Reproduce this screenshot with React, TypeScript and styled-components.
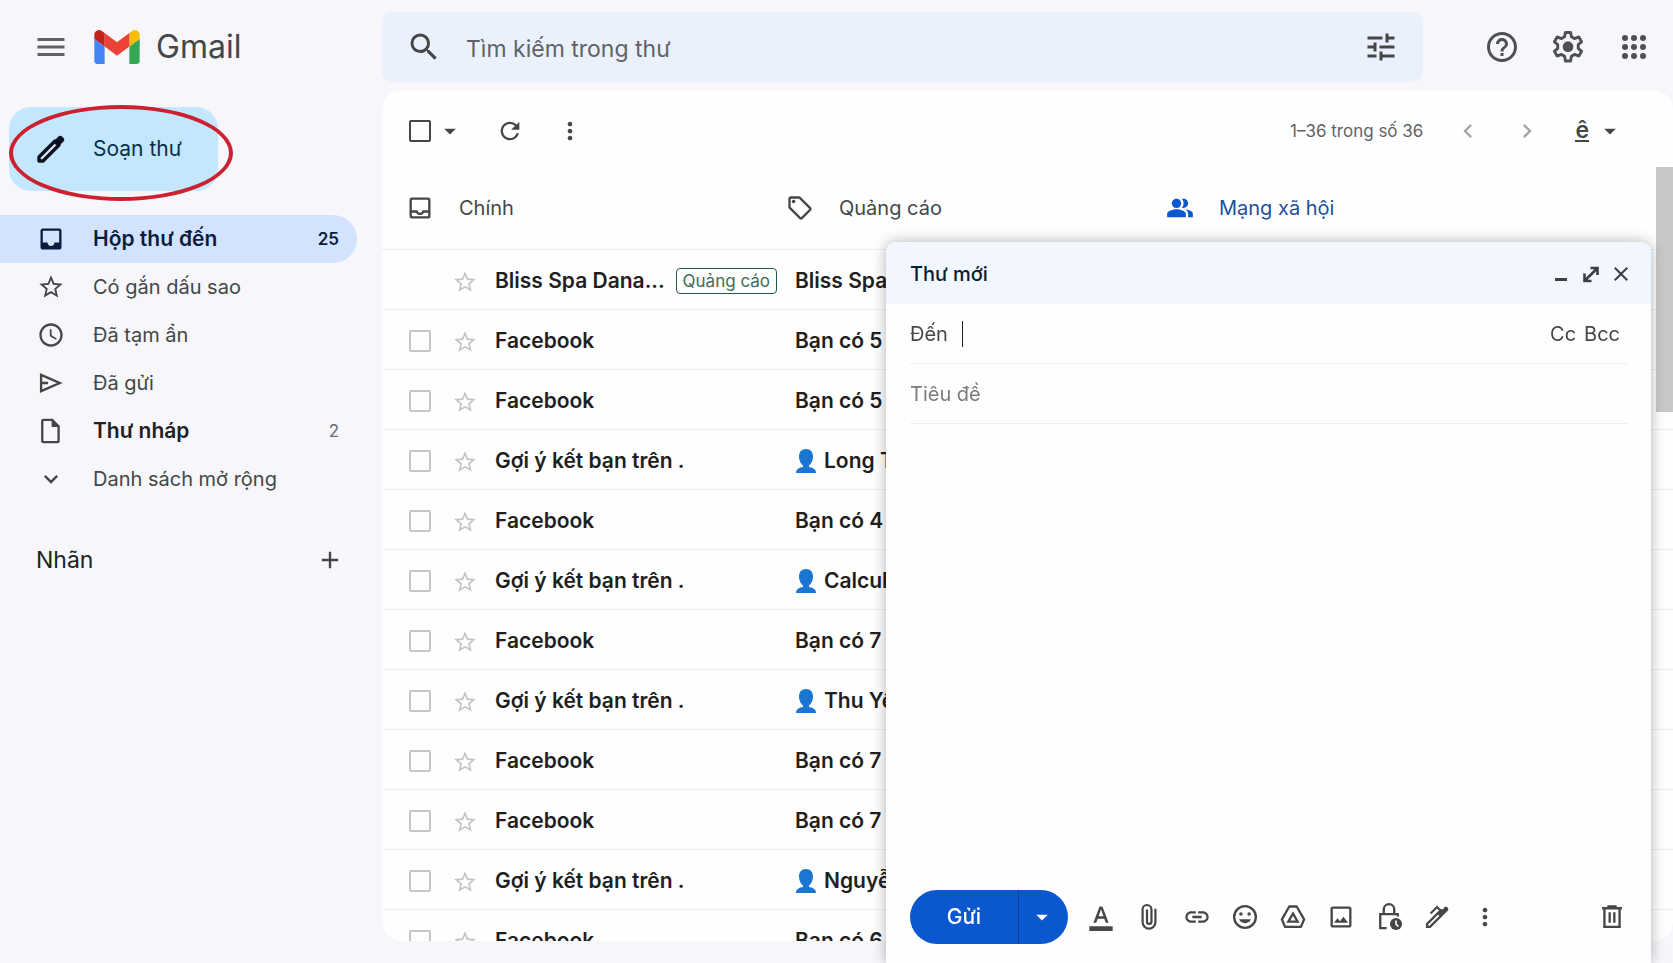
import React from "react";
import styled, { createGlobalStyle, css } from "styled-components";
import {
  MdMenu, MdSearch, MdTune, MdHelpOutline, MdInbox, MdOutlineInbox, MdStarOutline, MdAccessTime,
  MdExpandMore, MdAdd, MdArrowDropDown, MdRefresh, MdMoreVert, MdChevronLeft, MdChevronRight,
  MdPeopleAlt, MdOutlineSell, MdClose, MdLink, MdOutlineInsertPhoto, MdFormatColorText,
} from "react-icons/md";

const GlobalStyle = createGlobalStyle`
  *, *::before, *::after { box-sizing: border-box; }
  body {
    margin: 0;
    background: #f6f6fb;
    color: #444746;
    font-family: Inter, "Noto Sans", sans-serif;
    font-size: 20px;
    line-height: 24px;
  }
  button, input { font: inherit; color: inherit; }
  button { border: 0; padding: 0; background: none; cursor: pointer; }
  h1, h2, ul { margin: 0; padding: 0; font-weight: 400; }
  ul { list-style: none; }
  svg { display: block; flex: none; }
`;

const Page = styled.div`
  display: grid;
  grid-template-columns: 382px minmax(0, 1fr);
  grid-template-rows: 90px minmax(0, 1fr);
  height: 100vh;
  overflow: hidden;
`;

const Brand = styled.div`
  display: flex;
  align-items: center;
  padding: 4px 0 0 34px;
`;

const Logo = styled.a`
  display: flex;
  align-items: center;
  gap: 16px;
  margin-left: 26px;
  color: #444746;
  font-size: 32px;
  line-height: 40px;
  text-decoration: none;
`;

const TopBar = styled.header`
  display: flex;
  padding: 12px 22px 8px 0;
`;

const Search = styled.form`
  display: flex;
  align-items: center;
  flex: 1;
  padding: 0 26px;
  border-radius: 10px;
  background: #eaf1fc;
`;

const SearchInput = styled.input`
  flex: 1;
  min-width: 0;
  margin: 4px 20px 0 26px;
  padding: 0;
  border: 0;
  outline: 0;
  background: none;
  font-size: 23px;
  line-height: 32px;
  &::placeholder { color: #5f6368; opacity: 1; }
`;

const TopActions = styled.div`
  display: flex;
  align-items: center;
  gap: 32px;
  margin-left: 62px;
  color: #4d5156;
`;

const IconButton = styled.button<{ $size?: number; $color?: string }>`
  display: flex;
  align-items: center;
  justify-content: center;
  flex: none;
  width: ${(p) => p.$size ?? 34}px;
  height: ${(p) => p.$size ?? 34}px;
  color: ${(p) => p.$color ?? "inherit"};
`;

const Sidebar = styled.nav`
  display: flex;
  flex-direction: column;
  align-items: flex-start;
  padding: 17px 25px 0 0;
`;

const ComposeButton = styled.button`
  position: relative;
  display: flex;
  align-items: center;
  gap: 27px;
  width: 209px;
  height: 84px;
  margin: 0 0 24px 9px;
  padding-left: 27px;
  border-radius: 22px;
  background: #c2e7ff;
  color: #0a3048;
  font-size: 21px;
`;

const Highlight = styled.span`
  position: absolute;
  inset: -2px -15px -10px 0;
  border: 4px solid #cc2230;
  border-radius: 50%;
  pointer-events: none;
`;

const NavList = styled.ul`
  align-self: stretch;
`;

const NavLink = styled.a<{ $active?: boolean; $bold?: boolean }>`
  display: flex;
  align-items: center;
  height: 48px;
  padding: 0 18px 0 37px;
  border-radius: 0 24px 24px 0;
  color: ${(p) => (p.$active ? "#0b1d3f" : "#444746")};
  background: ${(p) => (p.$active ? "#d3e3fd" : "transparent")};
  font-size: ${(p) => (p.$active || p.$bold ? 21 : 20)}px;
  font-weight: ${(p) => (p.$active || p.$bold ? 600 : 400)};
  text-decoration: none;
`;

const NavText = styled.span<{ $bold?: boolean }>`
  flex: 1;
  margin-left: 28px;
  color: ${(p) => (p.$bold ? "#202124" : "inherit")};
`;

const Count = styled.span<{ $strong?: boolean }>`
  color: ${(p) => (p.$strong ? "inherit" : "#6b6e70")};
  font-size: 17px;
  font-weight: ${(p) => (p.$strong ? 600 : 400)};
`;

const LabelsHead = styled.div`
  display: flex;
  align-items: center;
  justify-content: space-between;
  align-self: stretch;
  margin-top: 41px;
  padding: 0 13px 0 36px;
`;

const LabelsTitle = styled.h2`
  color: #202124;
  font-size: 23px;
  line-height: 32px;
`;

const Panel = styled.main`
  display: flex;
  flex-direction: column;
  min-height: 0;
  margin-bottom: 22px;
  border-radius: 20px;
  background: #fefefe;
  overflow: hidden;
`;

const Toolbar = styled.div`
  display: flex;
  align-items: center;
  flex: none;
  height: 76px;
  padding: 6px 49px 0 27px;
`;

const Check = styled.input<{ $light?: boolean }>`
  appearance: none;
  display: block;
  flex: none;
  width: 22px;
  height: 22px;
  margin: 0;
  border: 2px solid ${(p) => (p.$light ? "#c4c6c8" : "#444746")};
  border-radius: 2px;
  visibility: ${(p) => (p.hidden ? "hidden" : "visible")};
`;

const ToolGroup = styled.div`
  display: flex;
  align-items: center;
  gap: 32px;
  margin-left: 5px;
`;

const Range = styled.span`
  margin-left: auto;
  font-size: 17px;
  color: #5f6368;
`;

const Pager = styled.div`
  display: flex;
  gap: 31px;
  margin: 0 34px 0 31px;
  color: #a3a5a7;
`;

const InputTool = styled.button`
  display: flex;
  align-items: center;
  gap: 7px;
`;

const Underlined = styled.span`
  font-size: 23px;
  font-weight: 600;
  line-height: 20px;
  border-bottom: 2px solid #444746;
`;

const Tabs = styled.div`
  display: flex;
  flex: none;
  height: 84px;
  padding-left: 2px;
  border-bottom: 1px solid #eceeef;
`;

const Tab = styled.button<{ $active?: boolean }>`
  display: flex;
  align-items: center;
  gap: 25px;
  width: 380px;
  padding: 0 0 0 22px;
  color: ${(p) => (p.$active ? "#0b57d0" : "#444746")};
`;

const TabText = styled.span<{ $active?: boolean }>`
  color: ${(p) => (p.$active ? "#1f4f9c" : "inherit")};
`;

const MailList = styled.ul`
  flex: 1;
  min-height: 0;
  padding-left: 2px;
  overflow: hidden;
`;

const MailRow = styled.li`
  display: flex;
  align-items: center;
  height: 60px;
  padding: 2px 0 0 25px;
  border-bottom: 1px solid #eceeef;
  color: #1f1f1f;
  font-size: 21px;
  font-weight: 600;
  white-space: nowrap;
`;

const StarButton = styled(IconButton)`
  margin: 3px 16px 0 20px;
`;

const Sender = styled.span`
  display: flex;
  align-items: center;
  justify-content: space-between;
  flex: none;
  width: 300px;
  padding-right: 18px;
`;

const Badge = styled.span`
  flex: none;
  padding: 0 6px;
  border: 1px solid #235c45;
  border-radius: 4px;
  color: #3f6d57;
  font-size: 17px;
  font-weight: 400;
`;

const Subject = styled.span`
  display: flex;
  align-items: center;
  gap: 7px;
  min-width: 0;
  overflow: hidden;
`;

const ScrollThumb = styled.div`
  position: fixed;
  top: 167px;
  right: 0;
  width: 17px;
  height: 245px;
  background: #c8c8c8;
`;

const Composer = styled.section`
  position: fixed;
  right: 22px;
  bottom: 0;
  display: flex;
  flex-direction: column;
  width: 765px;
  height: calc(100vh - 242px);
  border-radius: 10px 10px 0 0;
  background: #fefefe;
  box-shadow: 0 0 14px rgba(0, 0, 0, 0.3);
  overflow: hidden;
`;

const ComposerHead = styled.header`
  display: flex;
  align-items: center;
  flex: none;
  height: 62px;
  padding: 2px 19px 0 24px;
  background: #f2f6fe;
  color: #0b1d33;
`;

const ComposerTitle = styled.h2`
  flex: 1;
  font-size: 20px;
  font-weight: 500;
`;

const WindowActions = styled.div`
  display: flex;
  gap: 8px;
  color: #3c4043;
`;

const Field = styled.div`
  display: flex;
  align-items: center;
  flex: none;
  height: 60px;
  margin: 0 23px 0 24px;
  border-bottom: 1px solid #eceeef;
`;

const FieldInput = styled.input`
  flex: 1;
  min-width: 0;
  padding: 0;
  border: 0;
  outline: 0;
  background: none;
  &::placeholder { color: #7a7d80; opacity: 1; }
`;

const Caret = styled.span`
  width: 1px;
  height: 26px;
  margin-left: 14px;
  background: #1f1f1f;
`;

const CopyLinks = styled.div`
  display: flex;
  gap: 8px;
  padding-right: 8px;
`;

const Body = styled.div`
  flex: 1;
`;

const ComposerFoot = styled.footer`
  display: flex;
  align-items: center;
  flex: none;
  padding: 0 23px 19px 24px;
`;

const SendGroup = styled.div`
  display: flex;
  height: 54px;
  margin-right: 17px;
  border-radius: 27px;
  background: #0b57d0;
  color: #fff;
  overflow: hidden;
`;

const sendPart = css`
  display: flex;
  align-items: center;
  justify-content: center;
`;

const SendButton = styled.button`
  ${sendPart}
  width: 108px;
  font-size: 21px;
  font-weight: 500;
`;

const SendMore = styled.button`
  ${sendPart}
  width: 50px;
  padding-right: 4px;
  border-left: 1px solid #0a3f97;
`;

const FormatTools = styled.div`
  display: flex;
  flex: 1;
  gap: 16px;
`;

type IconProps = { size?: number };

const Stroke = ({ size = 28, children, width = 2 }: IconProps & { width?: number; children: React.ReactNode }) => (
  <svg width={size} height={size} viewBox="0 0 24 24" fill="none" stroke="currentColor" strokeWidth={width} aria-hidden="true">
    {children}
  </svg>
);

const MailLogo = () => (
  <svg width="46" height="34" viewBox="52 42 88 66" aria-hidden="true">
    <path fill="#4285f4" d="M58 108h14V74L52 59v43c0 3.32 2.69 6 6 6" />
    <path fill="#34a853" d="M120 108h14c3.32 0 6-2.69 6-6V59l-20 15" />
    <path fill="#fbbc04" d="M120 48v26l20-15v-8c0-7.42-8.47-11.65-14.4-7.2" />
    <path fill="#ea4335" d="M72 74V48l24 18 24-18v26L96 92" />
    <path fill="#c5221f" d="M52 51v8l20 15V48l-5.6-4.2c-5.94-4.45-14.4-.22-14.4 7.2" />
  </svg>
);

const PencilIcon = () => (
  <svg width="30" height="30" viewBox="0 0 30 30" aria-hidden="true">
    <path d="M3 27v-4L19 7l4 4L7 27z" fill="#dde9f5" stroke="#0b1220" strokeWidth="3.4" strokeLinejoin="round" />
    <path d="M17 8l5.500-5.500c1-1 2.500-1 3.500 0l1.500 1.500c1 1 1 2.500 0 3.500L22 13z" fill="#0b1220" />
  </svg>
);

const GearIcon = () => (
  <svg width="34" height="34" viewBox="1.500 1.100 21 21" aria-hidden="true">
    <path
      fill="none" stroke="currentColor" strokeWidth="1.800" strokeLinejoin="round"
      d="M10.400 2.600h3.200l.5 2.700c.8.300 1.400.6 2 1.100l2.600-1 1.700 2.900-2.100 1.900c.1.800.1 1.400 0 2.200l2.100 1.900-1.700 2.900-2.600-1c-.6.500-1.200.8-2 1.100l-.5 2.900h-3.200l-.5-2.900c-.8-.3-1.400-.6-2-1.100l-2.600 1-1.700-2.900 2.100-1.900c-.1-.8-.1-1.400 0-2.200L3.600 8.300l1.700-2.900 2.600 1c.6-.5 1.200-.8 2-1.100z"
    />
    <circle cx="12" cy="11.400" r="3.300" fill="currentColor" />
  </svg>
);

const AppsIcon = () => (
  <svg width="34" height="34" viewBox="0 0 34 34" fill="currentColor" aria-hidden="true">
    {[8, 17, 26].map((y) => [8, 17, 26].map((x) => <circle key={`${x}-${y}`} cx={x} cy={y} r="3" />))}
  </svg>
);

const SendIcon = () => <Stroke><path d="M3.500 5L19.500 12 3.500 19z M3.500 12h6" /></Stroke>;
const FileIcon = () => (
  <Stroke>
    <path d="M5.500 2.500h7.500l5.500 5.500v12.500a1 1 0 0 1-1 1h-12a1 1 0 0 1-1-1v-17a1 1 0 0 1 1-1z" strokeLinejoin="round" />
    <path d="M13 2.500v5.500h5.500z" fill="currentColor" strokeWidth="1" />
  </Stroke>
);
const MinimizeIcon = () => (
  <svg width="22" height="22" viewBox="0 0 22 22" fill="currentColor" aria-hidden="true">
    <rect x="5" y="15" width="12" height="3" />
  </svg>
);
const ExpandIcon = () => (
  <svg width="22" height="22" viewBox="0 0 22 22" fill="none" stroke="currentColor" strokeWidth="2.600" aria-hidden="true">
    <path d="M10.500 5h7v7 M17 5.500L5 17.500 M4.500 10.500v7.500h7" />
  </svg>
);
const ClipIcon = () => (
  <Stroke><path d="M17.500 5v11.500a5.500 5.500 0 0 1-11 0V5.500a3.800 3.800 0 0 1 7.600 0v10.500a1.900 1.900 0 0 1-3.800 0V5.500" strokeWidth="1.900" /></Stroke>
);
const SmileIcon = () => (
  <Stroke>
    <circle cx="12" cy="12" r="9.300" />
    <g fill="currentColor" stroke="none">
      <circle cx="8.500" cy="9.500" r="1.500" />
      <circle cx="15.500" cy="9.500" r="1.500" />
      <path d="M7 14h10a5.200 4.500 0 0 1-10 0z" />
    </g>
  </Stroke>
);
const DriveIcon = () => (
  <Stroke>
    <path d="M8.800 3h6.400l6.300 11-2.700 6.500H5.200L2.500 14z" strokeLinejoin="round" />
    <path d="M12 9l4 7H8z" />
  </Stroke>
);
const LockClockIcon = () => (
  <Stroke>
    <path d="M10 21.500H4.500V9.500h15v2 M7.500 9.500V5.500a4.500 4.500 0 0 1 9 0v4" />
    <circle cx="18" cy="18" r="5.200" fill="currentColor" stroke="none" />
    <path d="M18 15v3.200l2 1.800" stroke="#fefefe" strokeWidth="1.400" />
  </Stroke>
);
const PenIcon = () => (
  <Stroke>
    <path d="M3.500 20.500v-2.500L13 8.500l2.500 2.500L6 20.500z" />
    <path d="M12 8.500l3-3.500 2 .5 1.500-2c1.500-1 4 1 3 3L15.500 12z" fill="currentColor" stroke="none" />
    <path d="M6.500 9l5.500-5.500 2.500 2.500" strokeWidth="1.800" />
  </Stroke>
);
const TrashIcon = () => (
  <Stroke>
    <path d="M3.500 4.500h17 M9 4V3h6v1 M5.500 4.500v16h13v-16 M10 8v9 M14 8v9" />
  </Stroke>
);
const PersonIcon = () => (
  <svg width="22" height="24" viewBox="0 0 22 24" fill="#1a76d2" aria-hidden="true">
    <path d="M11 0c4.500 0 7 3 7 7.500 0 4-1.800 7.500-4 9v1.500c3.500.6 7 1.800 7 6H1c0-4.200 3.500-5.400 7-6v-1.500c-2.200-1.500-4-5-4-9C4 3 6.500 0 11 0z" />
  </svg>
);

const folders = [
  { text: "Hộp thư đến", icon: <MdInbox size={28} />, count: "25", active: true },
  { text: "Có gắn dấu sao", icon: <MdStarOutline size={28} /> },
  { text: "Đã tạm ẩn", icon: <MdAccessTime size={28} /> },
  { text: "Đã gửi", icon: <SendIcon /> },
  { text: "Thư nháp", icon: <FileIcon />, count: "2", bold: true },
  { text: "Danh sách mở rộng", icon: <MdExpandMore size={28} /> },
];

type Mail = { from: string; subject: string; ad?: boolean; person?: boolean };

const mails: Mail[] = [
  { from: "Bliss Spa Dana...", subject: "Bliss Spa", ad: true },
  { from: "Facebook", subject: "Bạn có 5" },
  { from: "Facebook", subject: "Bạn có 5" },
  { from: "Gợi ý kết bạn trên .", subject: "Long T", person: true },
  { from: "Facebook", subject: "Bạn có 4" },
  { from: "Gợi ý kết bạn trên .", subject: "Calcul", person: true },
  { from: "Facebook", subject: "Bạn có 7" },
  { from: "Gợi ý kết bạn trên .", subject: "Thu Yê", person: true },
  { from: "Facebook", subject: "Bạn có 7" },
  { from: "Facebook", subject: "Bạn có 7" },
  { from: "Gợi ý kết bạn trên .", subject: "Nguyễ", person: true },
  { from: "Facebook", subject: "Bạn có 6" },
];

const formatTools = [
  { name: "Định dạng", icon: <MdFormatColorText size={28} /> },
  { name: "Đính kèm tệp", icon: <ClipIcon /> },
  { name: "Chèn liên kết", icon: <MdLink size={28} /> },
  { name: "Chèn biểu tượng", icon: <SmileIcon /> },
  { name: "Chèn từ Drive", icon: <DriveIcon /> },
  { name: "Chèn ảnh", icon: <MdOutlineInsertPhoto size={28} /> },
  { name: "Chế độ bảo mật", icon: <LockClockIcon /> },
  { name: "Chèn chữ ký", icon: <PenIcon /> },
  { name: "Tùy chọn khác", icon: <MdMoreVert size={28} /> },
];

export default function App() {
  return (
    <>
      <GlobalStyle />
      <Page>
        <Brand>
          <IconButton aria-label="Menu chính"><MdMenu size={36} color="#5f6368" /></IconButton>
          <Logo href="#"><MailLogo />Gmail</Logo>
        </Brand>
        <TopBar>
          <Search role="search">
            <IconButton type="button" $size={32} aria-label="Tìm kiếm"><MdSearch size={36} /></IconButton>
            <SearchInput aria-label="Tìm kiếm trong thư" placeholder="Tìm kiếm trong thư" />
            <IconButton type="button" $size={32} aria-label="Bộ lọc"><MdTune size={36} /></IconButton>
          </Search>
          <TopActions>
            <IconButton aria-label="Trợ giúp"><MdHelpOutline size={36} /></IconButton>
            <IconButton aria-label="Cài đặt"><GearIcon /></IconButton>
            <IconButton aria-label="Ứng dụng"><AppsIcon /></IconButton>
          </TopActions>
        </TopBar>
        <Sidebar>
          <ComposeButton>
            <PencilIcon />
            Soạn thư
            <Highlight />
          </ComposeButton>
          <NavList>
            {folders.map((f) => (
              <li key={f.text}>
                <NavLink href="#" $active={f.active} $bold={f.bold}>
                  {f.icon}
                  <NavText $bold={f.bold}>{f.text}</NavText>
                  {f.count && <Count $strong={f.active}>{f.count}</Count>}
                </NavLink>
              </li>
            ))}
          </NavList>
          <LabelsHead>
            <LabelsTitle>Nhãn</LabelsTitle>
            <IconButton $size={28} aria-label="Tạo nhãn"><MdAdd size={28} /></IconButton>
          </LabelsHead>
        </Sidebar>
        <Panel>
          <Toolbar>
            <Check type="checkbox" aria-label="Chọn tất cả" />
            <ToolGroup>
              <IconButton $size={28} aria-label="Tùy chọn chọn"><MdArrowDropDown size={28} /></IconButton>
              <IconButton $size={28} aria-label="Làm mới"><MdRefresh size={28} /></IconButton>
              <IconButton $size={28} aria-label="Khác"><MdMoreVert size={28} /></IconButton>
            </ToolGroup>
            <Range>1–36 trong số 36</Range>
            <Pager>
              <IconButton $size={28} aria-label="Trang trước"><MdChevronLeft size={28} /></IconButton>
              <IconButton $size={28} aria-label="Trang sau"><MdChevronRight size={28} /></IconButton>
            </Pager>
            <InputTool aria-label="Công cụ nhập"><Underlined>ê</Underlined><MdArrowDropDown size={28} /></InputTool>
          </Toolbar>
          <Tabs>
            <Tab><MdOutlineInbox size={28} /><TabText>Chính</TabText></Tab>
            <Tab><MdOutlineSell size={28} /><TabText>Quảng cáo</TabText></Tab>
            <Tab $active><MdPeopleAlt size={28} /><TabText $active>Mạng xã hội</TabText></Tab>
          </Tabs>
          <MailList>
            {mails.map((m, i) => (
              <MailRow key={i}>
                <Check type="checkbox" $light hidden={m.ad} aria-label={`Chọn thư ${i + 1}`} />
                <StarButton $size={28} $color="#c4c6c8" aria-label="Gắn dấu sao"><MdStarOutline size={26} /></StarButton>
                <Sender>
                  <span>{m.from}</span>
                  {m.ad && <Badge>Quảng cáo</Badge>}
                </Sender>
                <Subject>{m.person && <PersonIcon />}{m.subject}</Subject>
              </MailRow>
            ))}
          </MailList>
        </Panel>
      </Page>
      <ScrollThumb />
      <Composer aria-label="Thư mới">
        <ComposerHead>
          <ComposerTitle>Thư mới</ComposerTitle>
          <WindowActions>
            <IconButton $size={22} aria-label="Thu nhỏ"><MinimizeIcon /></IconButton>
            <IconButton $size={22} aria-label="Phóng to"><ExpandIcon /></IconButton>
            <IconButton $size={22} aria-label="Đóng"><MdClose size={24} /></IconButton>
          </WindowActions>
        </ComposerHead>
        <Field>
          <label htmlFor="to">Đến</label>
          <Caret />
          <FieldInput id="to" />
          <CopyLinks><button>Cc</button><button>Bcc</button></CopyLinks>
        </Field>
        <Field>
          <FieldInput aria-label="Tiêu đề" placeholder="Tiêu đề" />
        </Field>
        <Body />
        <ComposerFoot>
          <SendGroup>
            <SendButton>Gửi</SendButton>
            <SendMore aria-label="Tùy chọn gửi"><MdArrowDropDown size={28} /></SendMore>
          </SendGroup>
          <FormatTools>
            {formatTools.map((t) => (
              <IconButton key={t.name} $size={32} aria-label={t.name}>{t.icon}</IconButton>
            ))}
          </FormatTools>
          <IconButton $size={32} aria-label="Hủy thư nháp"><TrashIcon /></IconButton>
        </ComposerFoot>
      </Composer>
    </>
  );
}
